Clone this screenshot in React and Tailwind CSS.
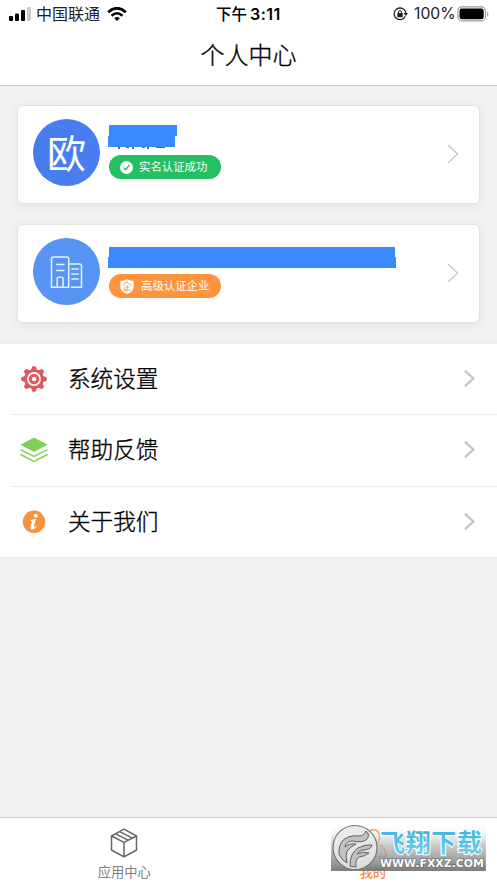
const Chevron = ({ className }) => (
  <svg viewBox="0 0 12 20" fill="none" strokeLinecap="round" className={className}>
    <path d="M1.5 1.5 10.5 10 1.5 18.5" stroke="currentColor" />
  </svg>
);

const GearIcon = () => (
  <svg width="28" height="28" viewBox="-14 -14 28 28">
    <g fill="#df5a5c">
      <circle r="9.9" />
      {[0, 45, 90, 135, 180, 225, 270, 315].map((deg) => (
        <path
          key={deg}
          transform={`rotate(${deg})`}
          d="M-4.2-8.5C-2.7-9-2.4-10-2.2-11.2-2-13-1-12.8 0-12.8 1-12.8 2-13 2.2-11.2 2.4-10 2.7-9 4.2-8.5Z"
        />
      ))}
    </g>
    <circle r="6.1" fill="none" stroke="#fff" strokeWidth="1.7" />
    <circle r="2.2" fill="#fff" />
  </svg>
);

const LayersIcon = () => (
  <svg width="28" height="28" viewBox="0 0 28 28" fill="none">
    <path d="M14 1.4 27.6 8.7 14 16 .4 8.7Z" fill="#7fd255" />
    <path
      d="M.5 13.7 14 20.5 27.5 13.7M.5 18.5 14 25.3 27.5 18.5"
      stroke="#7fd255"
      strokeWidth="1.5"
    />
  </svg>
);

const InfoIcon = () => (
  <svg width="28" height="28" viewBox="0 0 28 28">
    <circle cx="14" cy="13.8" r="11.2" fill="#fa913c" />
    <circle cx="15.7" cy="7.8" r="2" fill="#fff" />
    <path
      d="M10.6 11.8Q13.5 11.7 16 11L13.9 18.8Q13.6 20 14.6 19.3L16 17.8 16.7 18.3Q14.4 21.6 12.1 21.5 9.8 21.3 10.5 18.5L11.8 13.9Q12 12.8 10.4 12.7Z"
      fill="#fff"
    />
  </svg>
);

const BuildingIcon = () => (
  <svg width="34" height="34" viewBox="0 0 34 34" fill="none" stroke="#e6f3ff" strokeWidth="1.5">
    <path d="M1.5 32.2V4Q1.5 2 3.5 2H16.7Q18.7 2 18.7 4V32.2ZM18.7 9H29.5Q31.5 9 31.5 11V32.2H21" />
    <path d="M7.2 32V23.8Q7.2 22.2 8.8 22.2H11.5Q13.1 22.2 13.1 23.8V32" />
    <path d="M6.2 9.5H14.4M6.2 15.4H14.4M21.3 14H28.7M21.3 19H28.7M21.3 24H28.7" />
  </svg>
);

const BoxIcon = () => (
  <svg
    width="28"
    height="30"
    viewBox="0 0 28 30"
    fill="none"
    stroke="#666"
    strokeWidth="1.5"
    strokeLinejoin="round"
  >
    <path d="M14 1.2 26.5 8V22L14 28.8 1.5 22V8ZM1.5 8 14 14.4 26.5 8M14 14.4V28.8M9.8 3.6 22.3 10.1M5.7 5.8 18.2 12.2" />
  </svg>
);

const UserIcon = () => (
  <svg width="28" height="30" viewBox="0 0 28 30" fill="none" stroke="#fa8b35" strokeWidth="1.6">
    <rect x="8.5" y="1.5" width="12" height="15" rx="6" />
    <path d="M9 17Q1 19.5 1 28.5H27Q27 19.5 20 17" />
  </svg>
);

const StatusBar = () => (
  <div className="flex h-[28px] items-center text-[16px] text-[#222]">
    <div className="flex w-[216px] items-center pl-[9px]">
      <svg width="22" height="14" viewBox="0 0 22 14">
        <rect y="9" width="4" height="5" rx="1" />
        <rect x="6" y="6.5" width="4" height="7.5" rx="1" />
        <rect x="12" y="3" width="4" height="11" rx="1" />
        <rect x="18" width="4" height="14" rx="1" fill="#ccc" />
      </svg>
      <span className="ml-[5px] h-[28px] leading-[27px]">中国联通</span>
      <svg width="20" height="15" viewBox="0 0 20 15" className="ml-[7px]" fill="none" stroke="#000">
        <path d="M1.2 5.2Q10-2.6 18.8 5.2" strokeWidth="2.8" />
        <path d="M4.5 8.7Q10 3.9 15.5 8.7" strokeWidth="2.5" />
        <path d="M7.2 11.2Q10 8.8 12.8 11.2L10 14Z" fill="#000" stroke="none" />
      </svg>
    </div>
    <div className="flex w-[177px] items-center">
      <span className="h-[28px] text-[15.5px] font-medium leading-[27px] text-black">下午</span>
      <span className="ml-[3px] font-['Inter',sans-serif] text-[16px] font-semibold leading-[28px] tracking-[0.5px] text-black">
        3:11
      </span>
    </div>
    <svg width="15" height="14" viewBox="0 0 15 14" fill="none" stroke="#222" strokeWidth="1.3">
      <path d="M11 2.6A5.8 5.8 0 1 0 12.2 9.3M11 2.6Q12.6 4 12.8 6" />
      <path d="M10.5 6H15L12.8 9Z" fill="#222" stroke="none" />
      <rect x="4.3" y="6" width="5.4" height="4.3" rx=".6" fill="#222" stroke="none" />
      <path d="M5.5 6.3V5Q5.5 3.7 7 3.7 8.5 3.7 8.5 5V6.3" strokeWidth="1" />
    </svg>
    <span className="ml-[6px] w-[43px] whitespace-nowrap font-['Inter',sans-serif] text-[15.7px] leading-[28px]">
      100%
    </span>
    <svg width="32" height="16" viewBox="0 0 32 16" className="mb-px">
      <rect x=".9" y=".9" width="27.5" height="14" rx="4" fill="#fff" stroke="#999" strokeWidth="1.1" />
      <rect x="2.5" y="2.5" width="24.2" height="10.8" rx="2.2" />
      <path d="M30 5.4Q31.5 6.5 31.5 8T30 10.6Z" fill="#aaa" />
    </svg>
  </div>
);

const Card = ({ children }) => (
  <div className="flex h-[99px] items-start rounded-[6px] border border-[#e2e2e2] bg-white pl-[15px] pr-[20px] pt-[13px] shadow-[0_2px_10px_rgba(0,0,0,0.07)]">
    {children}
    <Chevron className="ml-auto mt-[25px] h-[20px] w-[12px] stroke-[1.4] text-[#c8c8c8]" />
  </div>
);

const menu = [
  { label: "系统设置", icon: <GearIcon /> },
  { label: "帮助反馈", icon: <LayersIcon /> },
  { label: "关于我们", icon: <InfoIcon /> },
];

const Watermark = () => (
  <svg className="absolute left-[331px] top-[5px]" width="156" height="48" viewBox="0 0 156 48">
    <defs>
      <linearGradient id="shade" x2="0" y2="1">
        <stop stopColor="#fff" stopOpacity="0" />
        <stop offset=".45" stopColor="#bbb" stopOpacity=".75" />
        <stop offset="1" stopColor="#777" stopOpacity=".96" />
      </linearGradient>
      <linearGradient id="cyan" x2="0" y2="1">
        <stop offset=".2" stopColor="#46b4dc" />
        <stop offset="1" stopColor="#72d6f5" />
      </linearGradient>
    </defs>
    <rect width="155" height="48" fill="url(#shade)" />
    <circle cx="24" cy="24.5" r="22" fill="#e8e8e8" fillOpacity=".88" stroke="#777" strokeWidth="1.2" />
    <g fill="#c2c2c2" stroke="#555" strokeWidth=".9" strokeLinejoin="round">
      <path d="M8 31Q7 18 17 14 23 12 28 13 33 13 35 8 40 12 35 17 30 20 22 18 15 18 14 24 18 20 25 21 19 24 16 28 14 32 16 40 10 37 8 31Z" />
      <path d="M19 43Q19 30 27 25 34 21 41 22 40 27 32 27 28 27 26 31 31 28 38 30 32 34 28 34 24 36 25 44Z" />
    </g>
    <text
      x="49"
      y="29"
      textLength="102"
      fontSize="25"
      fontWeight="700"
      fill="url(#cyan)"
      stroke="#fff"
      strokeWidth="2"
      paintOrder="stroke"
      fontFamily="'Noto Sans CJK SC', sans-serif"
    >
      飞翔下载
    </text>
    <text
      x="49"
      y="44"
      textLength="104"
      lengthAdjust="spacingAndGlyphs"
      fontSize="10.5"
      fontWeight="700"
      fill="#fff"
      stroke="#666"
      strokeWidth="1.2"
      paintOrder="stroke"
      fontFamily="'DejaVu Sans', sans-serif"
    >
      WWW.FXXZ.COM
    </text>
  </svg>
);

export default function App() {
  return (
    <div className="flex h-[883px] w-[497px] flex-col overflow-hidden bg-[#f2f2f2] font-['Noto_Sans_CJK_SC',sans-serif] text-black">
      <header className="h-[86px] shrink-0 border-b border-[#c6c6c6] bg-white">
        <StatusBar />
        <h1 className="pt-[6px] text-center text-[24px] font-light leading-[40px] [-webkit-text-stroke:0.35px_#000]">
          个人中心
        </h1>
      </header>

      <section className="flex flex-col gap-[20px] px-[17px] pt-[19px]">
        <Card>
          <div className="flex size-[67px] items-center justify-center rounded-full bg-[#487def] pb-[2px] text-[39px] leading-none text-white">
            欧
          </div>
          <div className="ml-[8px] pt-[6px]">
            <div className="ml-px h-[11px] w-[68px] bg-[#3b89ff]" />
            <div className="h-[11px] w-[67px] bg-[#3b89ff]" />
            <svg width="67" height="2" viewBox="0 0 67 2" className="block" fill="#5a668c">
              <path d="M10 0h2v2h-2zM18 0h3v1h-3zM24 0h2v2h-2zM34 0h3v1h-3zM39 0h2v2h-2zM48 0h9v1h-9z" />
            </svg>
            <div className="ml-px mt-[6px] flex h-[24px] w-[112px] items-center rounded-full bg-[#24bf62] pl-[11px] text-[11.4px] text-white">
              <svg width="13" height="13" viewBox="0 0 13 13" className="mr-[6px]">
                <circle cx="6.5" cy="6.5" r="6.5" fill="#fff" />
                <path d="M3.5 6.6 5.7 8.7 9.4 4.2" fill="none" stroke="#24bf62" strokeWidth="1.3" />
              </svg>
              实名认证成功
            </div>
          </div>
        </Card>
        <Card>
          <div className="flex size-[67px] items-center justify-center rounded-full bg-[#5894f4]">
            <BuildingIcon />
          </div>
          <div className="ml-[8px] pt-[9px]">
            <div className="ml-px h-[10px] w-[286px] bg-[#3b89ff]" />
            <div className="h-[11px] w-[288px] bg-[#3b89ff]" />
            <div className="ml-px mt-[6px] flex h-[24px] w-[112px] items-center rounded-full bg-[#ff943e] pl-[11px] text-[11.4px] text-white">
              <svg width="14" height="15" viewBox="0 0 14 15" className="mr-[7px]">
                <path d="M7 0Q10 2 13.7 2V8Q13.5 12.5 7 15 .5 12.5.3 8V2Q4 2 7 0Z" fill="#fff" />
                <path
                  d="M3 6.5 7 3 11 6.5M7 6V11M7 8H9.5M4.8 7.5V11M3.4 11.2H10.6"
                  fill="none"
                  stroke="#ff943e"
                  strokeWidth=".9"
                />
              </svg>
              高级认证企业
            </div>
          </div>
        </Card>
      </section>

      <ul className="mt-[20px] border-y border-[#ececec] bg-white">
        {menu.map((item, i) => (
          <li
            key={item.label}
            className={
              i === 0
                ? "ml-[11px] flex h-[70px] items-center pl-[9px] pr-[22px]"
                : "ml-[11px] flex h-[71.5px] items-center border-t border-[#ebebeb] pl-[9px] pr-[22px]"
            }
          >
            {item.icon}
            <span className="mb-[2px] ml-[20px] text-[22.6px] font-light leading-[40px] [-webkit-text-stroke:0.35px_#000]">
              {item.label}
            </span>
            <Chevron className="mb-px ml-auto h-[17px] w-[11px] stroke-[2.8] text-[#c4c4c4]" />
          </li>
        ))}
      </ul>

      <nav className="relative mt-auto flex h-[66px] shrink-0 border-t border-[#c9c9c9] bg-white text-[13.3px]">
        <div className="flex flex-1 flex-col items-center pt-[10px] text-[#808080]">
          <BoxIcon />
          <span className="mt-[4px] leading-[20px]">应用中心</span>
        </div>
        <div className="flex flex-1 flex-col items-center pt-[10px] text-[#fa8b35]">
          <UserIcon />
          <span className="mt-[4px] font-medium leading-[20px]">我的</span>
        </div>
        <Watermark />
      </nav>
    </div>
  );
}
